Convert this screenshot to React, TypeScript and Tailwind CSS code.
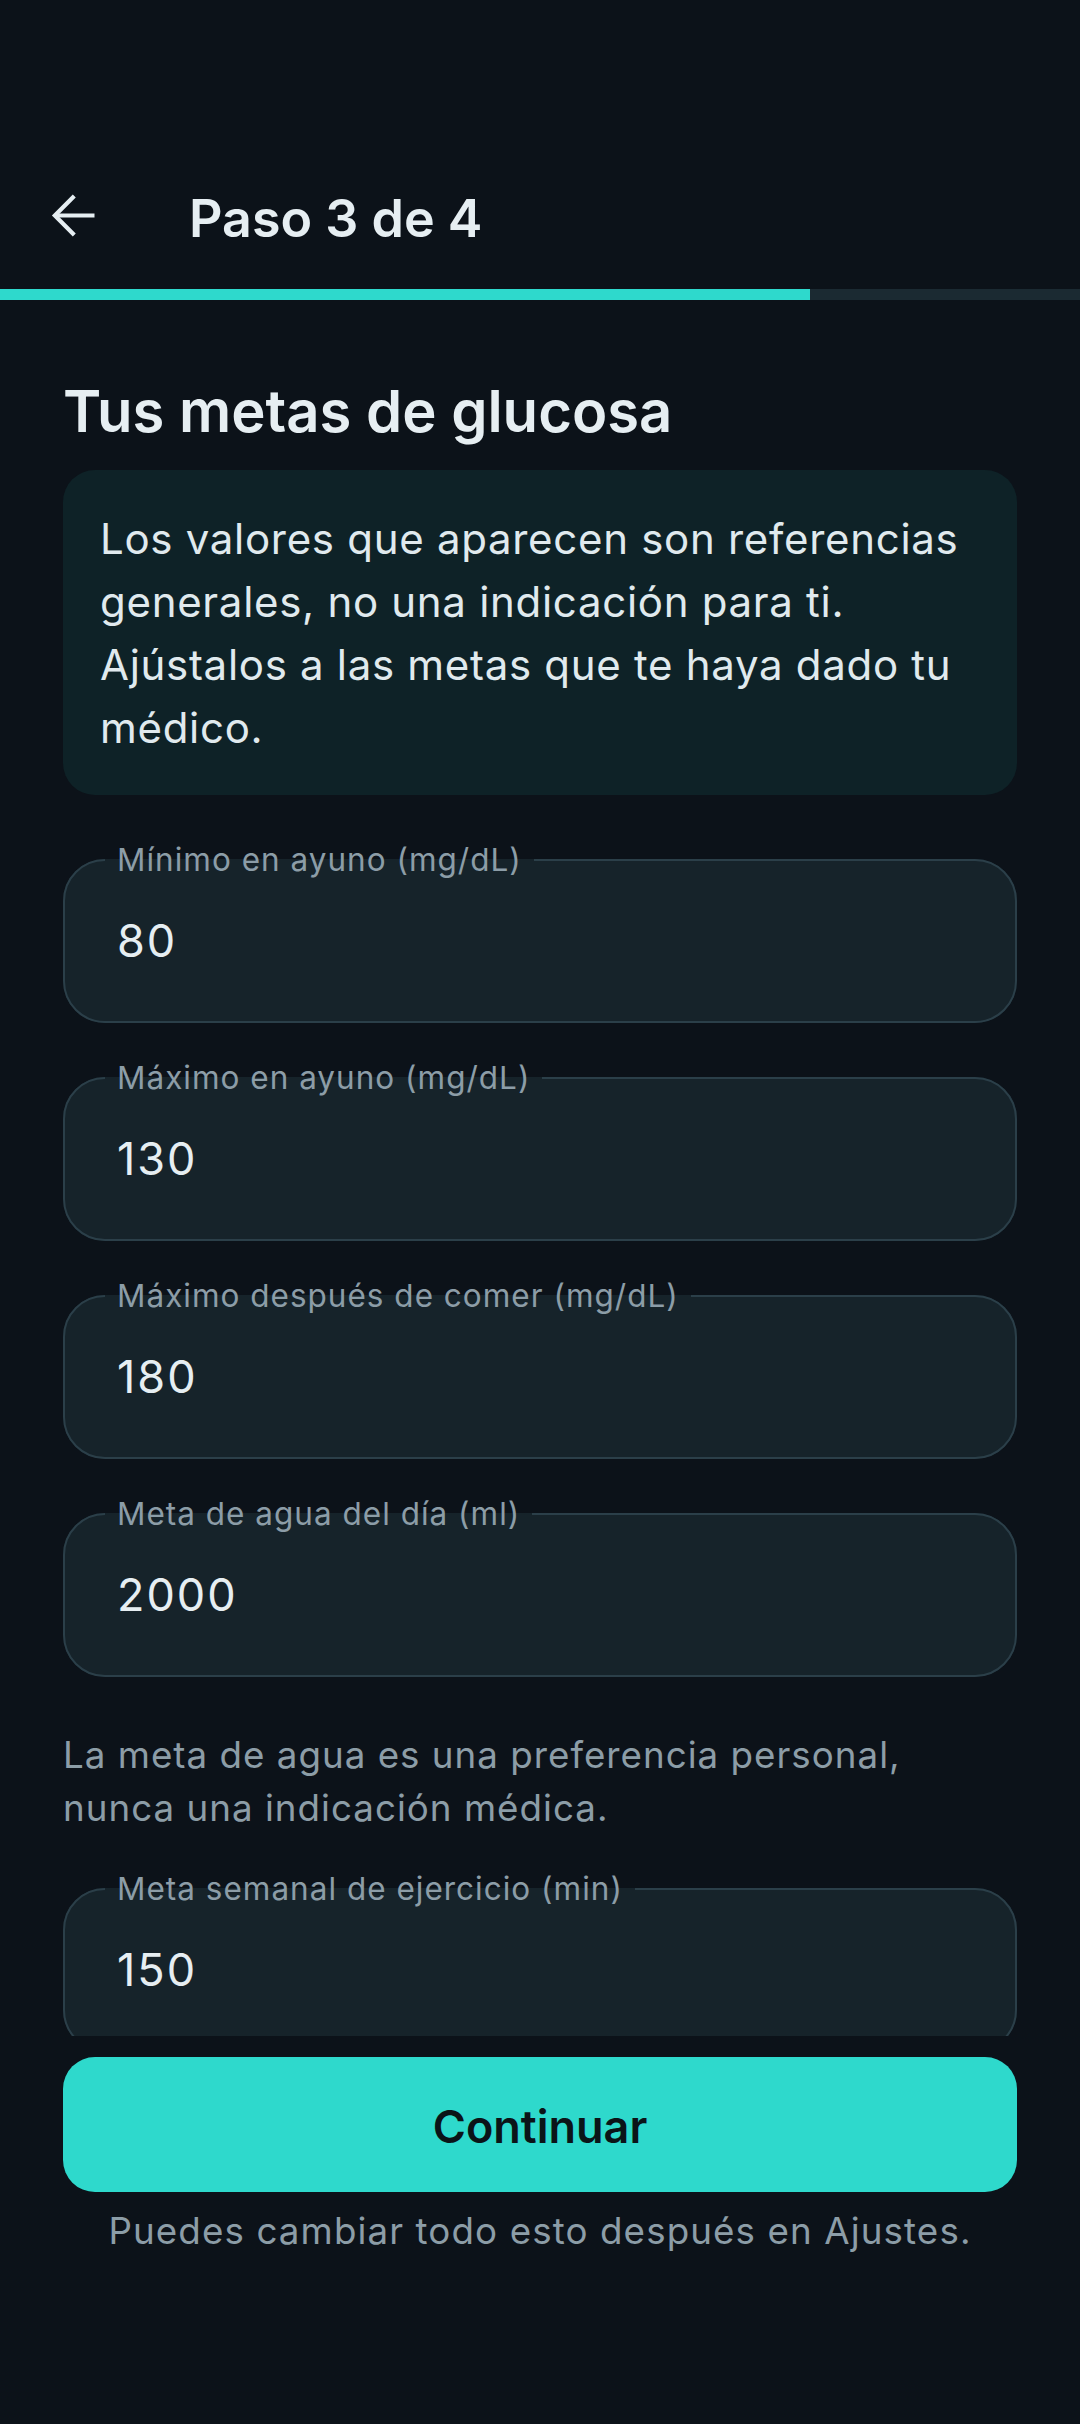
import React from 'react';

interface Goal {
  label: string;
  value: string;
}

const glucoseGoals: Goal[] = [
  { label: 'Mínimo en ayuno (mg/dL)', value: '80' },
  { label: 'Máximo en ayuno (mg/dL)', value: '130' },
  { label: 'Máximo después de comer (mg/dL)', value: '180' },
  { label: 'Meta de agua del día (ml)', value: '2000' },
];

function GoalField({ label, value }: Goal) {
  return (
    <fieldset className="rounded-[42px] border-2 border-[#2b3f49] bg-[#16232a]">
      <legend className="ml-[40px] px-[12px] text-[31.5px] leading-[32px] tracking-[1px] text-[#8c9da7]">
        {label}
      </legend>
      <div className="pl-[52px] pt-[38px] pb-[53px] text-[45px] leading-[54px] tracking-[2px] text-[#e6eef2]">
        {value}
      </div>
    </fieldset>
  );
}

export default function App() {
  return (
    <div className="flex h-[2424px] w-[1080px] flex-col overflow-hidden bg-[#0c1219] pt-[142px] font-['Inter',sans-serif]">
      {/* Top bar */}
      <div className="flex h-[147px] shrink-0 items-center">
        <div className="ml-[42px] flex h-[63px] w-[63px] items-center justify-center">
          <svg viewBox="0 0 24 24" className="h-[63px] w-[63px]" fill="none" stroke="#e6eef2" strokeWidth={1.6}>
            <path d="M20 12H5.6" />
            <path d="M12.3 4.6 4.9 12l7.4 7.4" />
          </svg>
        </div>
        <h1 className="ml-[84px] pt-[5px] text-[52px] font-semibold leading-[63px] text-[#e6eef2]">Paso 3 de 4</h1>
      </div>

      {/* Progress */}
      <div className="h-[11px] w-full shrink-0 bg-[#1b2a32]">
        <div className="h-full w-3/4 bg-[#2ed9cc]" />
      </div>

      {/* Scrollable content */}
      <main className="min-h-0 flex-1 overflow-hidden px-[63px] pt-[76px]">
        <h2 className="text-[58px] font-semibold leading-[70px] text-[#e6eef2]">Tus metas de glucosa</h2>

        <div className="mt-[24px] rounded-[32px] bg-[#0e2227] px-[37px] pt-[37px] pb-[36px]">
          <p className="text-[42px] leading-[63px] tracking-[0.7px] text-[#e0eaee]">
            Los valores que aparecen son referencias generales, no una indicación para ti. Ajústalos a las metas que te
            haya dado tu médico.
          </p>
        </div>

        <div className="mt-[49px] flex flex-col gap-[39px]">
          {glucoseGoals.map((g) => (
            <GoalField key={g.label} label={g.label} value={g.value} />
          ))}
        </div>

        <p className="mt-[52px] text-[36.75px] leading-[52.5px] tracking-[1px] text-[#8c9da7]">
          La meta de agua es una preferencia personal,
          <br />
          nunca una indicación médica.
        </p>

        <div className="mt-[39px]">
          <GoalField label="Meta semanal de ejercicio (min)" value="150" />
        </div>
      </main>

      {/* Bottom action */}
      <div className="h-[388px] shrink-0 px-[63px] pt-[21px]">
        <button className="flex h-[135px] w-full items-center justify-center rounded-[32px] bg-[#2ed9cc] pt-[5px] text-[45px] font-semibold text-[#0b1418]">
          Continuar
        </button>
        <p className="mt-[13px] text-center text-[36.75px] leading-[52.5px] tracking-[1.1px] text-[#8c9da7]">
          Puedes cambiar todo esto después en Ajustes.
        </p>
      </div>
    </div>
  );
}
